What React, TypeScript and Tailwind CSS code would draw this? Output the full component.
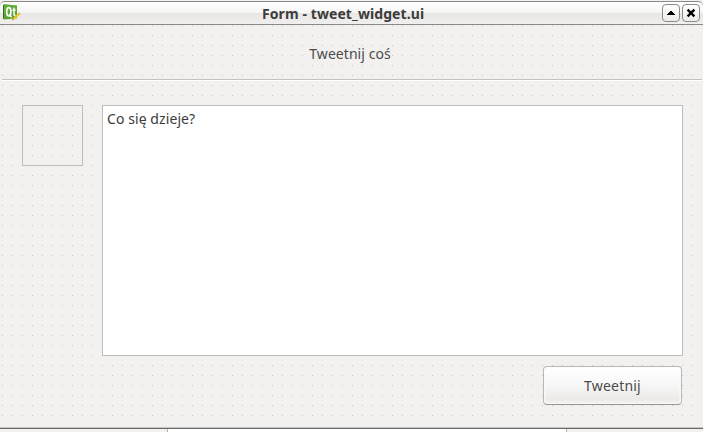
import React from 'react';

function QtIcon() {
  return (
    <svg width="19" height="18" viewBox="0 0 19 18" className="block">
      <path d="M1 1 2.4.2v15.2L1 14.4z" fill="#2c6b22" />
      <path d="M2.2.2 15 1.6v12.6L2.2 15.4z" fill="#55a32c" />
      <path d="M2.2.2 15 1.6v4L2.2 9z" fill="#70b748" opacity=".5" />
      <ellipse cx="6.8" cy="7.7" rx="2.1" ry="4.1" fill="none" stroke="#fff" strokeWidth="1.7" />
      <path d="M7.2 10 9.6 13.2M12 3.8v6.6q0 1.4 1.5.9M10.4 6.3h3.2" fill="none" stroke="#fff" strokeWidth="1.5" />
      <path d="M10.6 15.6 11.4 13.8 16.6 9l1.4 1.4-5.3 4.9z" fill="#f6c516" />
      <path d="m16.5 9 1-.8 1.2 1.3-.8.9z" fill="#e6a08c" />
      <path d="m10 16.4.8-1.9 1.5 1z" fill="#c9773a" />
    </svg>
  );
}

function TitleButton({ label, children }: { label: string; children: React.ReactNode }) {
  return (
    <button
      aria-label={label}
      className="flex h-[18px] w-[18px] items-center justify-center rounded-[4px] border border-[#8c8b89] bg-linear-to-b from-white to-[#ececea]"
    >
      {children}
    </button>
  );
}

function TitleBar() {
  return (
    <header className="flex h-6 items-center rounded-t-[5px] border-t border-b border-[#8b8987] bg-[linear-gradient(#ffffff_0%,#f5f5f4_50%,#e9e7e5_52%,#f0efed_100%)] pl-[2px] pr-[3px]">
      <QtIcon />
      <h1 className="ml-[241px] flex-1 pt-px text-[14px] leading-[20px] font-bold tracking-[0.09px] whitespace-nowrap text-[#3c3c3c]">
        Form - tweet_widget.ui
      </h1>
      <div className="flex justify-end gap-[2px]">
        <TitleButton label="Shade">
          <svg width="10" height="10" viewBox="0 0 10 10" shapeRendering="crispEdges">
            <path d="M4 3h2v1h1v1h1v1h1v1H1V6h1V5h1V4h1z" fill="#000" />
          </svg>
        </TitleButton>
        <TitleButton label="Close">
          <svg width="10" height="10" viewBox="0 0 10 10">
            <path d="m1.6 1.6 6.8 6.8M8.4 1.6 1.6 8.4" stroke="#000" strokeWidth="2.3" />
          </svg>
        </TitleButton>
      </div>
    </header>
  );
}

function Form() {
  return (
    <main className="relative isolate flex h-[402px] flex-col">
      {/* Designer grid points behind the form widgets */}
      <svg width="703" height="402" className="absolute inset-0 -z-10" shapeRendering="crispEdges">
        <defs>
          <pattern id="grid" width="10" height="10" patternUnits="userSpaceOnUse">
            <rect x="2" y="0" width="1" height="1" fill="#c6c4c2" />
          </pattern>
        </defs>
        <rect width="694" height="395" fill="url(#grid)" />
      </svg>
      <div className="flex h-[54px] items-center justify-center pt-[2px] pr-[3px]">
        <span className="tracking-[0.06px]">Tweetnij coś</span>
      </div>
      <hr className="mr-px ml-[2px] h-[2px] border-t border-b border-t-[#c3c1be] border-b-white" />
      <div className="mt-6 flex gap-[19px] pl-[22px]">
        <div className="h-[61px] w-[61px] border border-[#bfbdb9]" />
        <div className="h-[251px] w-[581px] border border-[#bfbdb9] bg-white px-1 pt-[3px] leading-[20px] tracking-[0.08px] text-[#3c3c3c]">
          Co się dzieje?
        </div>
      </div>
      <div className="mt-[10px] flex justify-end pr-[21px]">
        <button className="h-[39px] w-[139px] rounded-[4px] border border-[#bab8b5] border-b-[#999794] bg-[linear-gradient(#ffffff_0%,#f8f7f7_50%,#ebeae8_85%,#efeeec_100%)] tracking-[0.2px] shadow-[inset_0_0_3px_1px_#fbfbfa]">
          Tweetnij
        </button>
      </div>
    </main>
  );
}

export default function App() {
  return (
    <div className="flex h-[432px] w-[703px] flex-col overflow-hidden bg-[#f2f1f0] pt-px font-['Noto_Sans','Open_Sans',sans-serif] text-[14px] text-[#4c4c4c]">
      <TitleBar />
      <Form />
      <footer className="flex h-[5px] border-t border-[#c8c6c4]">
        <div className="flex w-full border-t border-[#6c6a68]">
          <div className="w-[168px] border-r border-[#b5b3b0] bg-[#f4f0ef]" />
          <div className="w-[399px] border-r border-[#b5b3b0] bg-white" />
          <div className="flex-1 bg-[#f2f1f0]" />
        </div>
      </footer>
    </div>
  );
}
